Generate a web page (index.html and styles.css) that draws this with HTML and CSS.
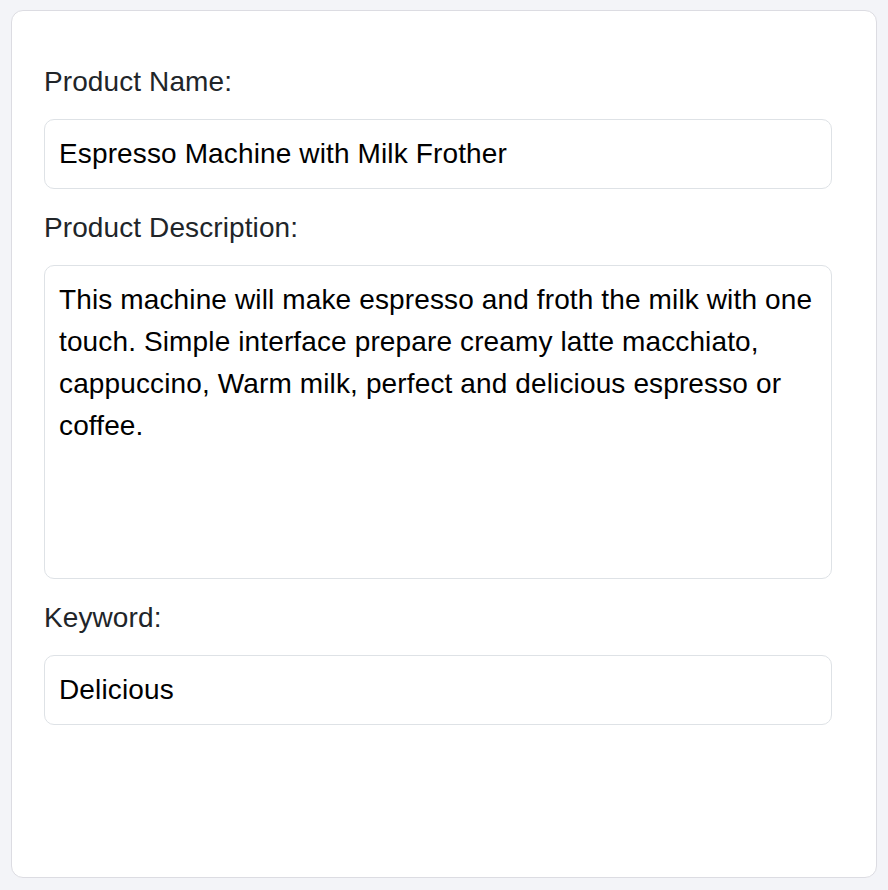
FILE: index.html
```html
<!DOCTYPE html>
<html lang="en">
<head>
    <meta charset="utf-8" />
    <meta name="viewport" content="width=device-width, initial-scale=1" />
    <title>Product</title>
    <link rel="stylesheet" href="styles.css">
</head>
<body>

  <div class="card">
    <form class="product-form">
      <label for="productName">Product Name:</label>
      <input type="text" id="productName" value="Espresso Machine with Milk Frother" />

      <label for="productDesc">Product Description:</label>
      <textarea id="productDesc">This machine will make espresso and froth the milk with one touch. Simple interface prepare creamy latte macchiato, cappuccino, Warm milk, perfect and delicious espresso or coffee.</textarea>

      <label for="keyword">Keyword:</label>
      <input type="text" id="keyword" value="Delicious" />
    </form>
  </div>

</body>
</html>
```

FILE: styles.css
```css
body {
    font-family: "Liberation Sans", Arial, sans-serif;
    background-color: #f3f4f8;
    margin: 0;
    padding: 10px 11px 12px 11px;
    box-sizing: border-box;
    height: 100vh;
}
.card {
    background-color: #fff;
    border: 1px solid #dcdce2;
    border-radius: 12px;
    height: 868px;
    box-sizing: border-box;
    padding: 50px 44px 0 32px;
}
.product-form {
    display: flex;
    flex-direction: column;
}
label {
    font-size: 28px;
    line-height: 42px;
    letter-spacing: 0.1px;
    color: #212529;
    margin-bottom: 16px;
}
input, textarea {
    font-family: inherit;
    font-size: 28px;
    line-height: 42px;
    letter-spacing: 0.13px;
    color: #000;
    padding: 13px 14px;
    border: 1px solid #dee2e6;
    border-radius: 10px;
    box-sizing: border-box;
    width: 100%;
    margin: 0 0 18px 0;
    outline: none;
    background: #fff;
}
input { height: 70px; }
textarea { height: 314px; resize: none; }
```
